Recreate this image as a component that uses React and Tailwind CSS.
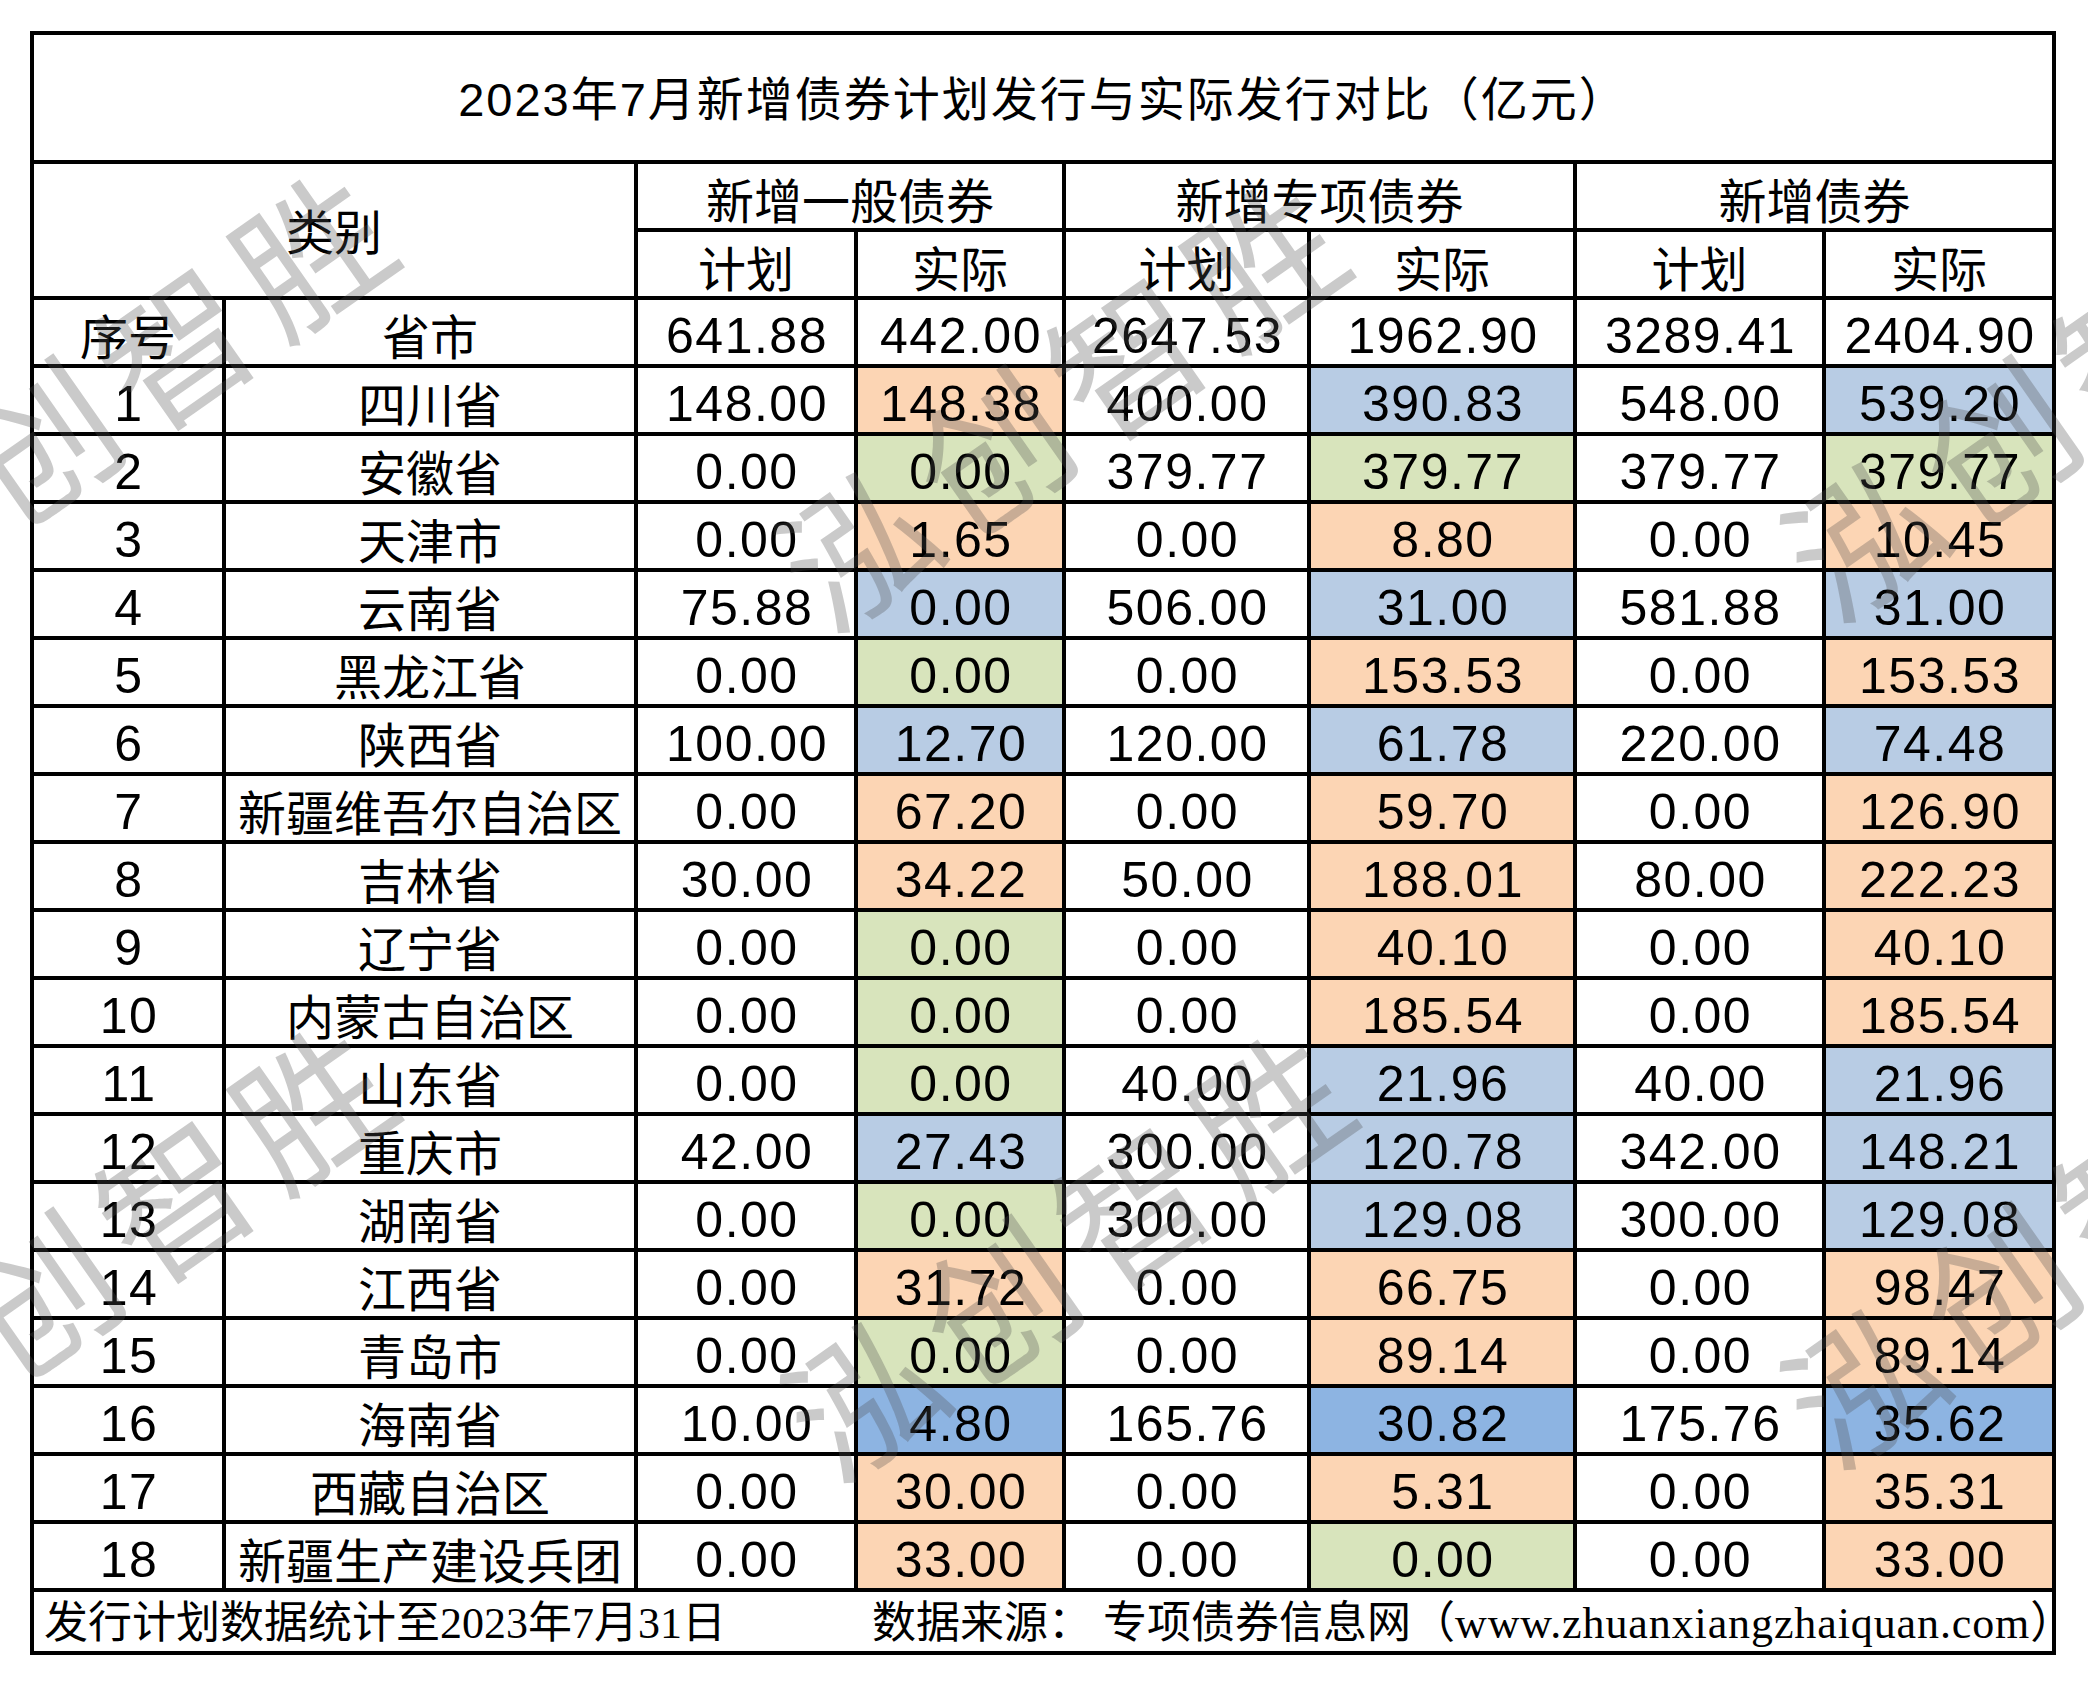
import React from "react";

const O = "bg-[#fcd5b4]";
const B = "bg-[#b8cce4]";
const G = "bg-[#d8e4bc]";
const D = "bg-[#8db4e2]";
const Wt = "bg-white";

const rows = [
  ["1", "四川省", "148.00", "148.38", "400.00", "390.83", "548.00", "539.20", O, B, B],
  ["2", "安徽省", "0.00", "0.00", "379.77", "379.77", "379.77", "379.77", G, G, G],
  ["3", "天津市", "0.00", "1.65", "0.00", "8.80", "0.00", "10.45", O, O, O],
  ["4", "云南省", "75.88", "0.00", "506.00", "31.00", "581.88", "31.00", B, B, B],
  ["5", "黑龙江省", "0.00", "0.00", "0.00", "153.53", "0.00", "153.53", G, O, O],
  ["6", "陕西省", "100.00", "12.70", "120.00", "61.78", "220.00", "74.48", B, B, B],
  ["7", "新疆维吾尔自治区", "0.00", "67.20", "0.00", "59.70", "0.00", "126.90", O, O, O],
  ["8", "吉林省", "30.00", "34.22", "50.00", "188.01", "80.00", "222.23", O, O, O],
  ["9", "辽宁省", "0.00", "0.00", "0.00", "40.10", "0.00", "40.10", G, O, O],
  ["10", "内蒙古自治区", "0.00", "0.00", "0.00", "185.54", "0.00", "185.54", G, O, O],
  ["11", "山东省", "0.00", "0.00", "40.00", "21.96", "40.00", "21.96", G, B, B],
  ["12", "重庆市", "42.00", "27.43", "300.00", "120.78", "342.00", "148.21", B, B, B],
  ["13", "湖南省", "0.00", "0.00", "300.00", "129.08", "300.00", "129.08", G, B, B],
  ["14", "江西省", "0.00", "31.72", "0.00", "66.75", "0.00", "98.47", O, O, O],
  ["15", "青岛市", "0.00", "0.00", "0.00", "89.14", "0.00", "89.14", G, O, O],
  ["16", "海南省", "10.00", "4.80", "165.76", "30.82", "175.76", "35.62", D, D, D],
  ["17", "西藏自治区", "0.00", "30.00", "0.00", "5.31", "0.00", "35.31", O, O, O],
  ["18", "新疆生产建设兵团", "0.00", "33.00", "0.00", "0.00", "0.00", "33.00", O, G, O],
];

const NUM = "font-['Liberation_Sans',sans-serif] text-[50px] tracking-[1.5px] pl-[2px] pt-[8px] leading-none";
const CJK = "font-['Noto_Sans_CJK_SC',sans-serif] text-[48px] leading-none pt-[4px]";

function Num({ v, bg = Wt }) {
  return (
    <div className={`${bg} flex items-center justify-center text-black ${NUM}`}>{v}</div>
  );
}

function Cjk({ v, className = "" }) {
  return (
    <div className={`bg-white flex items-center justify-center text-black ${CJK} ${className}`}>{v}</div>
  );
}

const WM = "absolute -translate-x-1/2 -translate-y-1/2 -rotate-35 whitespace-nowrap font-['Noto_Sans_CJK_SC',sans-serif] text-[150px] leading-none tracking-[15px] text-[rgba(80,80,80,0.3)] pointer-events-none select-none";

export default function App() {
  return (
    <div className="relative w-[2088px] h-[1685px] bg-white overflow-hidden">
      <div className="pl-[30px] pt-[31px]">
        <div className="grid w-[2026px] grid-cols-[188px_408px_216px_204px_241px_262px_245px_226px] grid-rows-[125px_64px_64px_repeat(19,64px)_59px] gap-[4px] bg-black p-[4px]">
          <div className="col-span-8 bg-white flex items-center justify-center text-black text-[47px] leading-none font-['Liberation_Sans','Noto_Sans_CJK_SC',sans-serif] tracking-[2px] pt-[4px]">
            2023年7月新增债券计划发行与实际发行对比（亿元）
          </div>
          <Cjk v="类别" className="col-span-2 row-span-2 pt-0 pb-[6px]" />
          <Cjk v="新增一般债券" className="col-span-2" />
          <Cjk v="新增专项债券" className="col-span-2" />
          <Cjk v="新增债券" className="col-span-2" />
          <Cjk v="计划" />
          <Cjk v="实际" />
          <Cjk v="计划" />
          <Cjk v="实际" />
          <Cjk v="计划" />
          <Cjk v="实际" />

          <Cjk v="序号" />
          <Cjk v="省市" />
          <Num v="641.88" />
          <Num v="442.00" />
          <Num v="2647.53" />
          <Num v="1962.90" />
          <Num v="3289.41" />
          <Num v="2404.90" />

          {rows.map((r) => (
            <React.Fragment key={r[0]}>
              <Num v={r[0]} />
              <Cjk v={r[1]} />
              <Num v={r[2]} />
              <Num v={r[3]} bg={r[8]} />
              <Num v={r[4]} />
              <Num v={r[5]} bg={r[9]} />
              <Num v={r[6]} />
              <Num v={r[7]} bg={r[10]} />
            </React.Fragment>
          ))}

          <div className="col-span-8 bg-white flex items-center overflow-hidden whitespace-nowrap text-black text-[44px] leading-none font-['Liberation_Serif','Noto_Sans_CJK_SC',serif] pl-[10px] pt-[4px]">
            <span className="w-[828px] shrink-0">发行计划数据统计至2023年7月31日</span>
            <span className="shrink-0">数据来源： 专项债券信息网（<span className="tracking-[0.9px]">www.zhuanxiangzhaiquan.com</span>）</span>
          </div>
        </div>
      </div>

      <div className={`${WM} left-[110px] top-[385px]`}>泓创智胜</div>
      <div className={`${WM} left-[1062px] top-[395px]`}>泓创智胜</div>
      <div className={`${WM} left-[2068px] top-[385px]`}>泓创智胜</div>
      <div className={`${WM} left-[110px] top-[1238px]`}>泓创智胜</div>
      <div className={`${WM} left-[1068px] top-[1245px]`}>泓创智胜</div>
      <div className={`${WM} left-[2068px] top-[1232px]`}>泓创智胜</div>
    </div>
  );
}
